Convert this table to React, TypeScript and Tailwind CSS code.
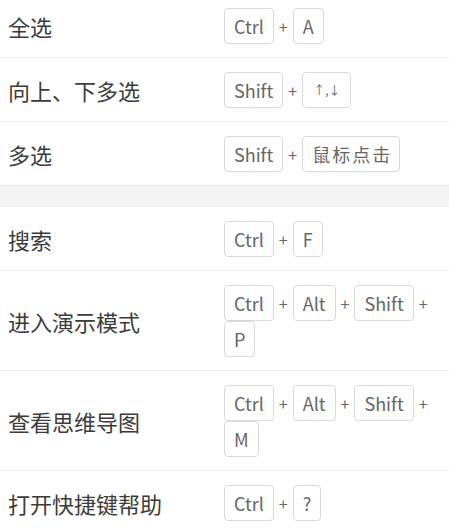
import React from "react"

type Row = { label: string; keys: string[] }

const groups: Row[][] = [
  [
    { label: "全选", keys: ["Ctrl", "A"] },
    { label: "向上、下多选", keys: ["Shift", "↑,↓"] },
    { label: "多选", keys: ["Shift", "鼠标点击"] },
  ],
  [
    { label: "搜索", keys: ["Ctrl", "F"] },
    { label: "进入演示模式", keys: ["Ctrl", "Alt", "Shift", "P"] },
    { label: "查看思维导图", keys: ["Ctrl", "Alt", "Shift", "M"] },
    { label: "打开快捷键帮助", keys: ["Ctrl", "?"] },
  ],
]

function Key({ k }: { k: string }) {
  let size = "text-[18px] px-[9px]"
  if (k === "↑,↓") size = "text-[12px] px-[10px]"
  if (k === "鼠标点击") size = "text-[18px] pl-[9px] pr-[7px] tracking-[2px]"
  return (
    <span
      className={
        "inline-flex h-9 items-center rounded-[4px] border border-[#dadada] bg-white text-[#666] " + size
      }
    >
      {k}
    </span>
  )
}

function ShortcutRow({ row, first, last }: { row: Row; first: boolean; last: boolean }) {
  return (
    <div
      className={
        "flex items-center pl-2 pb-[13px] " +
        (first ? "pt-2 " : "pt-[14px] ") +
        (last ? "" : "border-b border-[#ececec]")
      }
    >
      <div className="w-[216px] shrink-0 text-[22px] text-[#3c3c3c]">{row.label}</div>
      <div className="flex flex-1 flex-wrap items-center pr-3">
        {row.keys.map((k, i) => (
          <React.Fragment key={i}>
            {i > 0 && <span className="mx-[5px] text-[16px] text-[#666]">+</span>}
            <Key k={k} />
          </React.Fragment>
        ))}
      </div>
    </div>
  )
}

export default function App() {
  return (
    <div
      className="h-[531px] w-[449px] overflow-hidden bg-white"
      style={{ fontFamily: '"Noto Sans CJK SC", "Noto Sans", sans-serif' }}
    >
      {groups.map((g, gi) => (
        <div key={gi}>
          {gi > 0 && <div className="h-[21px] bg-[#f4f4f4]" />}
          {g.map((row, ri) => (
            <ShortcutRow
              key={ri}
              row={row}
              first={gi === 0 && ri === 0}
              last={gi === groups.length - 1 && ri === g.length - 1}
            />
          ))}
        </div>
      ))}
    </div>
  )
}
